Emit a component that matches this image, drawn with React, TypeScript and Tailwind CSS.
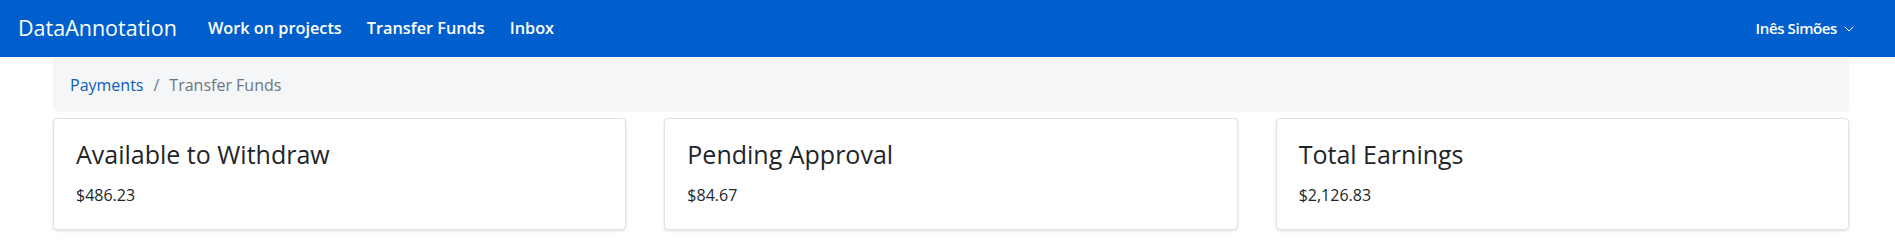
import { ChevronDown } from "lucide-react";

const stats = [
  { label: "Available to Withdraw", value: "$486.23" },
  { label: "Pending Approval", value: "$84.67" },
  { label: "Total Earnings", value: "$2,126.83" },
];

export default function App() {
  return (
    <div className="min-h-[240px] bg-white font-['Open_Sans',sans-serif] text-[#212529]">
      {/* Top navbar */}
      <nav className="flex h-[57px] items-center bg-[#005fcc] pl-[18px] pr-[38px] text-white">
        <a className="text-[21.5px] font-medium">DataAnnotation</a>
        <div className="ml-[31px] flex items-center gap-[25px] text-[16.3px] font-semibold">
          <a>Work on projects</a>
          <a>Transfer Funds</a>
          <a>Inbox</a>
        </div>
        <div className="ml-auto flex items-center gap-[4px] text-[15px] font-semibold tracking-[-0.4px]">
          <span>Inês Simões</span>
          <ChevronDown className="h-[16px] w-[16px]" strokeWidth={1.5} />
        </div>
      </nav>

      <main className="pl-[53px] pr-[46px]">
        {/* Breadcrumb */}
        <div className="mt-px flex h-[54px] items-center gap-[10px] rounded-b-[5px] bg-[#f4f6f8] px-[17px] text-[16px]">
          <a className="text-[#0a5cb8]">Payments</a>
          <span className="text-[#6c757d]">/</span>
          <span className="text-[#6c757d]">Transfer Funds</span>
        </div>

        {/* Balance cards */}
        <div className="mt-[6px] grid grid-cols-3 gap-[38px]">
          {stats.map((s) => (
            <div
              key={s.label}
              className="h-[112px] rounded-[4px] border border-[#dfe2e6] bg-white px-[22px] pt-[20px] shadow-[0_1px_3px_rgba(0,0,0,0.12)]"
            >
              <h5 className="text-[25px] font-medium leading-[30px] text-[#212529]">{s.label}</h5>
              <p className="mt-[14px] text-[16px] leading-[24px] text-[#212529]">{s.value}</p>
            </div>
          ))}
        </div>
      </main>
    </div>
  );
}
